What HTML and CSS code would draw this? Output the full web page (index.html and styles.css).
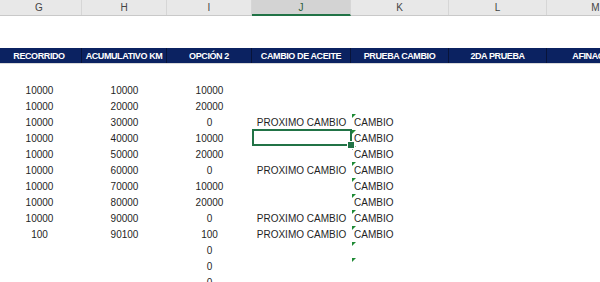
FILE: index.html
```html
<!DOCTYPE html>
<html lang="es">
<head>
    <meta charset="UTF-8">
    <meta name="viewport" content="width=device-width, initial-scale=1.0">
    <title>Control de aceite</title>
    <link rel="stylesheet" href="styles.css">
</head>
<body>
    <div class="sheet">
        <!-- column letters -->
        <div class="col-heads">
            <div class="col-head">G</div>
            <div class="col-head">H</div>
            <div class="col-head">I</div>
            <div class="col-head active">J</div>
            <div class="col-head">K</div>
            <div class="col-head">L</div>
            <div class="col-head">M</div>
        </div>

        <div class="gap-top"></div>

        <!-- table title row -->
        <div class="title-row">
            <div class="title-cell">RECORRIDO</div>
            <div class="title-cell">ACUMULATIVO KM</div>
            <div class="title-cell">OPCIÓN 2</div>
            <div class="title-cell">CAMBIO DE ACEITE</div>
            <div class="title-cell">PRUEBA CAMBIO</div>
            <div class="title-cell">2DA PRUEBA</div>
            <div class="title-cell">AFINACIÓN</div>
        </div>

        <div class="gap-mid"></div>

        <div class="rows">
            <div class="row">
                <div class="cell num">10000</div><div class="cell num">10000</div><div class="cell num">10000</div>
                <div class="cell mid"></div><div class="cell txt"></div><div class="cell"></div><div class="cell"></div>
            </div>
            <div class="row">
                <div class="cell num">10000</div><div class="cell num">20000</div><div class="cell num">20000</div>
                <div class="cell mid"></div><div class="cell txt"></div><div class="cell"></div><div class="cell"></div>
            </div>
            <div class="row">
                <div class="cell num">10000</div><div class="cell num">30000</div><div class="cell num">0</div>
                <div class="cell mid">PROXIMO CAMBIO</div><div class="cell txt flag">CAMBIO</div><div class="cell"></div><div class="cell"></div>
            </div>
            <div class="row">
                <div class="cell num">10000</div><div class="cell num">40000</div><div class="cell num">10000</div>
                <div class="cell mid selected"></div><div class="cell txt flag">CAMBIO</div><div class="cell"></div><div class="cell"></div>
            </div>
            <div class="row">
                <div class="cell num">10000</div><div class="cell num">50000</div><div class="cell num">20000</div>
                <div class="cell mid"></div><div class="cell txt flag">CAMBIO</div><div class="cell"></div><div class="cell"></div>
            </div>
            <div class="row">
                <div class="cell num">10000</div><div class="cell num">60000</div><div class="cell num">0</div>
                <div class="cell mid">PROXIMO CAMBIO</div><div class="cell txt flag">CAMBIO</div><div class="cell"></div><div class="cell"></div>
            </div>
            <div class="row">
                <div class="cell num">10000</div><div class="cell num">70000</div><div class="cell num">10000</div>
                <div class="cell mid"></div><div class="cell txt flag">CAMBIO</div><div class="cell"></div><div class="cell"></div>
            </div>
            <div class="row">
                <div class="cell num">10000</div><div class="cell num">80000</div><div class="cell num">20000</div>
                <div class="cell mid"></div><div class="cell txt flag">CAMBIO</div><div class="cell"></div><div class="cell"></div>
            </div>
            <div class="row">
                <div class="cell num">10000</div><div class="cell num">90000</div><div class="cell num">0</div>
                <div class="cell mid">PROXIMO CAMBIO</div><div class="cell txt flag">CAMBIO</div><div class="cell"></div><div class="cell"></div>
            </div>
            <div class="row">
                <div class="cell num">100</div><div class="cell num">90100</div><div class="cell num">100</div>
                <div class="cell mid">PROXIMO CAMBIO</div><div class="cell txt flag">CAMBIO</div><div class="cell"></div><div class="cell"></div>
            </div>
            <div class="row">
                <div class="cell num"></div><div class="cell num"></div><div class="cell num">0</div>
                <div class="cell mid"></div><div class="cell txt flag"></div><div class="cell"></div><div class="cell"></div>
            </div>
            <div class="row">
                <div class="cell num"></div><div class="cell num"></div><div class="cell num">0</div>
                <div class="cell mid"></div><div class="cell txt flag"></div><div class="cell"></div><div class="cell"></div>
            </div>
            <div class="row">
                <div class="cell num"></div><div class="cell num"></div><div class="cell num">0</div>
                <div class="cell mid"></div><div class="cell txt"></div><div class="cell"></div><div class="cell"></div>
            </div>
        </div>
    </div>
</body>
</html>
```

FILE: styles.css
```css
* {
    margin: 0;
    padding: 0;
    box-sizing: border-box;
}

body {
    background: #fff;
    overflow: hidden;
    font-family: 'Liberation Sans', Arial, sans-serif;
    font-size: 10px;
    color: #1f1f1f;
}

/* first column is scrolled a little out of view */
.sheet {
    margin-left: -3px;
    width: 648px;
}

.col-heads,
.title-row,
.row {
    display: grid;
    grid-template-columns: 85px 85px 85px 99px 98px 98px 98px;
}

/* column letters */
.col-heads {
    height: 16px;
    background: #e8e8e8;
    border-bottom: 1px solid #c9c9c9;
}

.col-head {
    display: flex;
    align-items: center;
    justify-content: center;
    color: #444;
    font-size: 10px;
    border-right: 1px solid #d6d6d6;
}

.col-head.active {
    background: #d3d3d3;
    color: #2c5e3c;
    border-bottom: 2px solid #217346;
    margin-bottom: -1px;
}

.gap-top {
    height: 32px;
}

/* navy title row */
.title-row {
    height: 16px;
    background: #0b2261;
    border-bottom: 1px solid #d9d9d9;
}

.title-cell {
    display: flex;
    align-items: center;
    justify-content: center;
    color: #fff;
    font-weight: bold;
    font-size: 9px;
    letter-spacing: -0.4px;
    white-space: nowrap;
    border-right: 1px solid #08143a;
}

.gap-mid {
    height: 18px;
}

.row {
    height: 16px;
}

.cell {
    position: relative;
    display: flex;
    align-items: center;
    white-space: nowrap;
}

.cell.num,
.cell.mid {
    justify-content: center;
}

.cell.txt {
    padding-left: 3px;
}

/* green error marker in the corner */
.cell.flag::before {
    content: '';
    position: absolute;
    top: 0;
    left: 1px;
    border-top: 4px solid #1f8a35;
    border-right: 4px solid transparent;
}

/* active cell */
.cell.selected::after {
    content: '';
    position: absolute;
    top: -1px;
    left: 0;
    right: -1px;
    bottom: 0;
    border: 2px solid #217346;
}

.cell.selected::before {
    content: '';
    position: absolute;
    right: -4px;
    bottom: -3px;
    width: 6px;
    height: 6px;
    background: #217346;
    border: 1px solid #fff;
    z-index: 2;
}
```
